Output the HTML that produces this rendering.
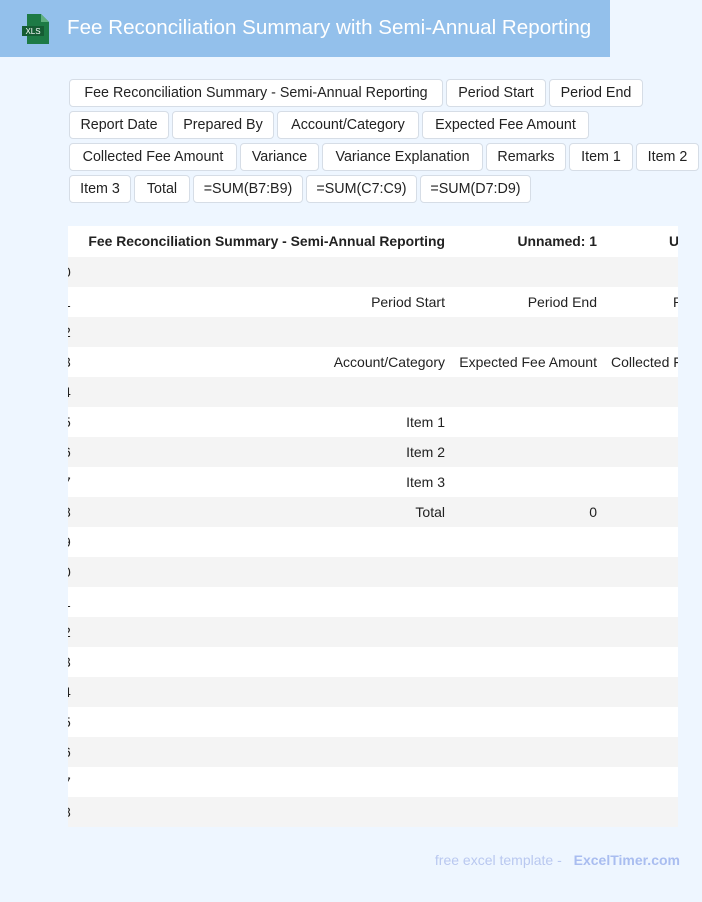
<!DOCTYPE html><html><head><style>
body{margin:0;width:702px;height:902px;background:#eef6ff;font-family:"Liberation Sans",Arial,sans-serif;position:relative;overflow:hidden}
.hdr{position:absolute;left:0;top:0;width:610px;height:57px;background:#93c0eb}
.hdr h1{position:absolute;left:67px;top:16px;margin:0;font-size:20.6px;font-weight:normal;color:#fff;white-space:nowrap}
.tags{position:absolute;left:69px;top:79px;width:634px;display:flex;flex-wrap:wrap;gap:4px 3px}
.tags span{box-sizing:border-box;background:#fff;border:1px solid #d6dde6;border-radius:4px;height:28px;line-height:26px;text-align:center;font-size:14.3px;color:#222;white-space:nowrap;overflow:hidden}
.tbl{position:absolute;left:68px;top:226px;width:610px;height:601px;overflow:hidden;background:#fff}
.r{position:absolute;left:0;width:610px;height:30px;font-size:14px;color:#222}
.r div{position:absolute;top:0;line-height:30px;white-space:nowrap}
.g{background:#f4f4f4}
.foot{position:absolute;right:22px;top:852px;font-size:14px;color:#b9c8f0}
.foot b{color:#a9bdf0;margin-left:8px}
</style></head><body>
<div class="hdr">
<svg style="position:absolute;left:20px;top:13px" width="32" height="32" viewBox="0 0 32 32"><path d="M7 1h14l8 8v22H7z" fill="#1d7a45"/><path d="M21 1v8h8z" fill="#5fb07f"/><rect x="2" y="13" width="22" height="10" fill="#155c33"/><text x="13" y="21" fill="#fff" font-size="8" font-family="Liberation Sans" text-anchor="middle">XLS</text></svg>
<h1>Fee Reconciliation Summary with Semi-Annual Reporting</h1></div>
<div class="tags"><span style="width:374px">Fee Reconciliation Summary - Semi-Annual Reporting</span><span style="width:100px">Period Start</span><span style="width:94px">Period End</span><span style="width:100px">Report Date</span><span style="width:102px">Prepared By</span><span style="width:142px">Account/Category</span><span style="width:167px">Expected Fee Amount</span><span style="width:168px">Collected Fee Amount</span><span style="width:79px">Variance</span><span style="width:161px">Variance Explanation</span><span style="width:80px">Remarks</span><span style="width:64px">Item 1</span><span style="width:63px">Item 2</span><span style="width:62px">Item 3</span><span style="width:56px">Total</span><span style="width:110px">=SUM(B7:B9)</span><span style="width:111px">=SUM(C7:C9)</span><span style="width:111px">=SUM(D7:D9)</span></div>
<div class="tbl">
<div class="r" style="top:0;height:31px;border-bottom:1px solid #222;font-weight:bold;font-size:13.9px"><div style="right:233px;line-height:31px">Fee Reconciliation Summary - Semi-Annual Reporting</div><div style="right:81px;line-height:31px">Unnamed: 1</div><div style="left:601px;line-height:31px">Unnamed</div></div>
<div class="r g" style="top:31px"><div style="left:-5px">0</div></div>
<div class="r" style="top:61px"><div style="left:-5px">1</div><div style="right:233px">Period Start</div><div style="right:81px">Period End</div><div style="left:605px">Prepared</div></div>
<div class="r g" style="top:91px"><div style="left:-5px">2</div></div>
<div class="r" style="top:121px"><div style="left:-5px">3</div><div style="right:233px">Account/Category</div><div style="right:81px">Expected Fee Amount</div><div style="left:543px">Collected Fee</div></div>
<div class="r g" style="top:151px"><div style="left:-5px">4</div></div>
<div class="r" style="top:181px"><div style="left:-5px">5</div><div style="right:233px">Item 1</div></div>
<div class="r g" style="top:211px"><div style="left:-5px">6</div><div style="right:233px">Item 2</div></div>
<div class="r" style="top:241px"><div style="left:-5px">7</div><div style="right:233px">Item 3</div></div>
<div class="r g" style="top:271px"><div style="left:-5px">8</div><div style="right:233px">Total</div><div style="right:81px">0</div></div>
<div class="r" style="top:301px"><div style="left:-5px">9</div></div>
<div class="r g" style="top:331px"><div style="left:-5px">0</div></div>
<div class="r" style="top:361px"><div style="left:-5px">1</div></div>
<div class="r g" style="top:391px"><div style="left:-5px">2</div></div>
<div class="r" style="top:421px"><div style="left:-5px">3</div></div>
<div class="r g" style="top:451px"><div style="left:-5px">4</div></div>
<div class="r" style="top:481px"><div style="left:-5px">5</div></div>
<div class="r g" style="top:511px"><div style="left:-5px">6</div></div>
<div class="r" style="top:541px"><div style="left:-5px">7</div></div>
<div class="r g" style="top:571px"><div style="left:-5px">8</div></div>
</div>
<div class="foot">free excel template - <b>ExcelTimer.com</b></div>
</body></html>
